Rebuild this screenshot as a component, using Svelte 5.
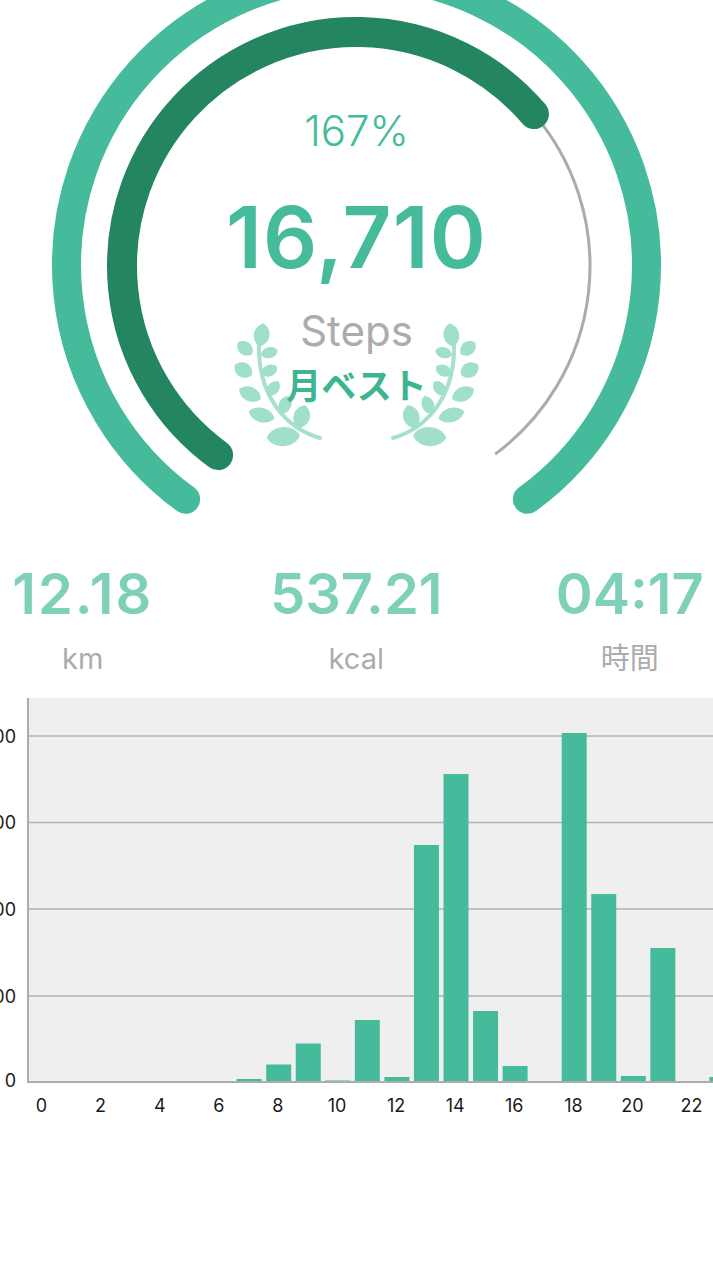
<script>
  const cx = 356.5;
  const leaves = [
    [125,105,70,46,-80],[75,145,56,40,40],[148,158,52,32,-15],[70,210,60,44,30],
    [148,212,52,34,-25],[90,282,72,42,25],[160,265,52,34,-50],[125,345,80,42,15],
    [195,315,58,36,-68],[245,350,72,48,-72],[190,410,100,56,-4]
  ].map(([x,y,l,w,a]) => ({ x: 220+x/3, y: 300+y/3, l: l/3, w: w/3, a }));

  const stats = [
    { value: '12.18', label: 'km', wide: true },
    { value: '537.21', label: 'kcal', wide: false },
    { value: '04:17', label: '時間', wide: false }
  ];

  const pt = (x, y, r, deg) => {
    const a = (deg * Math.PI) / 180;
    return `${x + r * Math.cos(a)} ${y + r * Math.sin(a)}`;
  };
  const arc = (x, y, r, from, to, large) =>
    `M${pt(x, y, r, from)} A${r} ${r} 0 ${large} 1 ${pt(x, y, r, to)}`;

  const outerArc = arc(356.5, 265, 290, 126.1, 53.9, 1);
  const innerArc = arc(356, 266, 234, 126.1, -40.5, 1);
  const trackArc = arc(356, 266, 234, -40.5, 53.5, 0);

  const bars = [[7,1079],[8,1064.5],[9,1043.5],[10,1080.5],[11,1020],[12,1077],[13,845],[14,774],[15,1011],[16,1066],[18,733],[19,894],[20,1076],[21,948],[23,1077]];
  const top = 698;
  const base = 1082;
  const hourX = (h) => 41.5 + 29.55 * h;
  const grid = [[736,'4000'],[822.5,'3000'],[909,'2000'],[996,'1000']];
  const hours = Array.from({ length: 12 }, (_, i) => i * 2);
</script>

<div class="page">
  <section class="gauge">
    <svg class="rings" width="713" height="530" viewBox="0 0 713 530">
      <path class="ring outer" d={outerArc} />
      <path class="track" d={trackArc} />
      <path class="ring inner" d={innerArc} />
      {#each [false, true] as mirror}
        <g transform={mirror ? `translate(${2 * cx} 0) scale(-1 1)` : undefined}>
          <path class="stem" d="M320 438 C285 428 257 395 259 342" />
          {#each leaves as f}
            <path
              class="leaf"
              transform={`translate(${f.x} ${f.y}) rotate(${f.a})`}
              d={`M${-f.l/2} 0 C${-f.l/3.2} ${-f.w*0.68} ${f.l/3.2} ${-f.w*0.68} ${f.l/2} 0 C${f.l/3.2} ${f.w*0.68} ${-f.l/3.2} ${f.w*0.68} ${-f.l/2} 0Z`}
            />
          {/each}
        </g>
      {/each}
    </svg>
    <div class="readout">
      <div class="percent">167%</div>
      <div class="steps">16,710</div>
      <div class="unit">Steps</div>
      <div class="best">月ベスト</div>
    </div>
  </section>

  <section class="stats">
    {#each stats as s}
      <div class="stat">
        <div class="value" class:wide={s.wide}>{s.value}</div>
        <div class="label">{s.label}</div>
      </div>
    {/each}
  </section>

  <svg class="chart" width="713" height="430" viewBox={`0 ${top} 713 430`}>
    <rect class="plot" x="27" y={top} width="686" height={base - top} />
    {#each grid as [y, label]}
      <line class="grid" x1="27" x2="713" y1={y} y2={y} />
      <text class="tick" x="16" y={y + 6.5} text-anchor="end">{label}</text>
    {/each}
    <text class="tick" x="16" y="1087" text-anchor="end">0</text>
    {#each bars as [h, y]}
      <rect class="bar" x={hourX(h) - 11.7} y={y} width="25" height={base - y} />
    {/each}
    <line class="axis" x1="28" x2="28" y1={top} y2={base + 1} />
    <line class="axis" x1="27" x2="713" y1={base} y2={base} />
    {#each hours as h}
      <text class="tick" x={hourX(h)} y="1111.5" text-anchor="middle">{h}</text>
    {/each}
  </svg>
</div>

<style>
  :global(body) {
    margin: 0;
    background: #fff;
  }
  .page {
    width: 713px;
    height: 1267px;
    overflow: hidden;
    font-family: Inter, "Noto Sans CJK JP", sans-serif;
  }
  .gauge {
    position: relative;
    height: 530px;
  }
  .rings {
    display: block;
  }
  .ring {
    fill: none;
    stroke-linecap: round;
    stroke-width: 29px;
  }
  .outer {
    stroke: #45bb9b;
  }
  .inner {
    stroke: #238660;
    stroke-width: 30px;
  }
  .track {
    fill: none;
    stroke: #acacac;
    stroke-width: 3px;
  }
  .stem {
    fill: none;
    stroke: #a6e0cf;
    stroke-width: 4px;
    stroke-linecap: round;
  }
  .leaf {
    fill: #9fdfcb;
  }
  .readout {
    position: absolute;
    inset: 0;
    display: flex;
    flex-direction: column;
    align-items: center;
    padding-top: 107px;
    box-sizing: border-box;
  }
  .percent {
    font-size: 42px;
    line-height: 48px;
    font-weight: 300;
    color: #45bb9b;
  }
  .steps {
    margin-top: 32px;
    font-size: 85px;
    line-height: 102px;
    font-weight: 600;
    letter-spacing: 1.2px;
    color: #45bb9b;
  }
  .unit {
    margin-top: 18px;
    font-size: 42px;
    line-height: 48px;
    color: #acacac;
  }
  .best {
    font-family: "Noto Sans CJK JP", sans-serif;
    font-size: 35px;
    line-height: 44px;
    font-weight: 700;
    color: #3db492;
    margin-top: 7px;
  }
  .stats {
    display: grid;
    grid-template-columns: repeat(3, 273.5px);
    margin-left: -54px;
    width: 821px;
    height: 168px;
    padding-top: 30px;
    box-sizing: border-box;
  }
  .stat {
    display: flex;
    flex-direction: column;
    align-items: center;
  }
  .value {
    font-size: 56px;
    line-height: 68px;
    font-weight: 600;
    color: #7fd0b9;
  }
  .value.wide {
    letter-spacing: 2px;
  }
  .label {
    margin-top: 13px;
    font-size: 29px;
    line-height: 36px;
    color: #acacac;
  }
  .chart {
    display: block;
  }
  .plot {
    fill: #efefef;
  }
  .grid {
    stroke: #b2b2b2;
    stroke-width: 1.5px;
  }
  .axis {
    stroke: #adadad;
    stroke-width: 2px;
  }
  .bar {
    fill: #45bb9b;
  }
  .tick {
    font-size: 18px;
    fill: #1a1a1a;
  }
</style>
